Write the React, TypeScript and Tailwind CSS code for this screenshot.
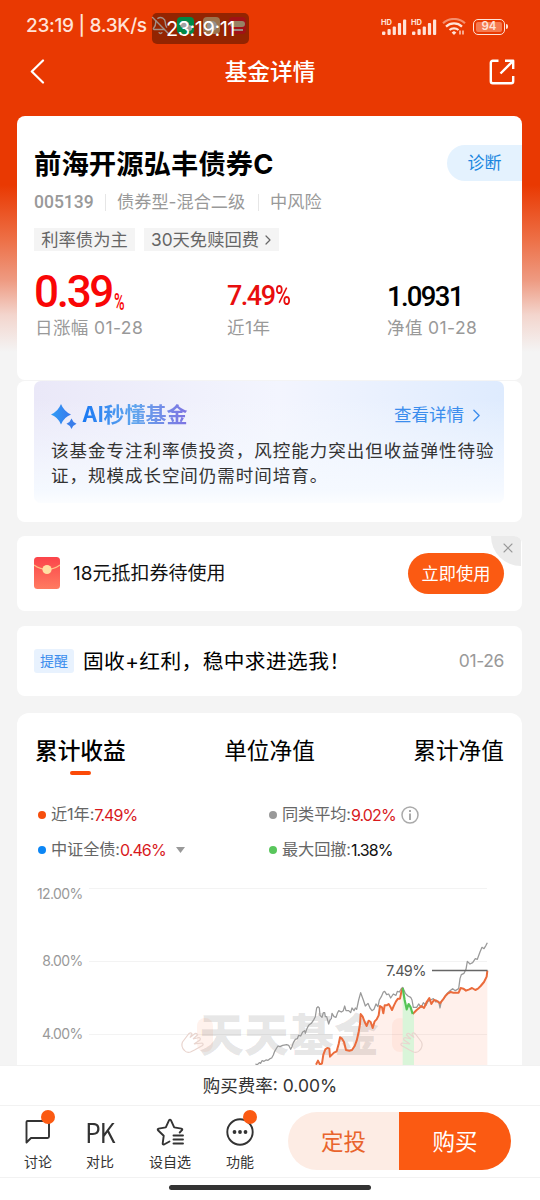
import type { ReactNode } from 'react';
import { ChevronRight, X, BellOff } from 'lucide-react';

const averageLine =
  '46,432 52,434 58,428 62,430 66,422 72,424 78,420 84,421 90,416 95,414 100,405 104,394 110,384 114,378 120,380 128,376 140,374 146,376 152,388 156,380 160,368 166,358 172,356 176,346 182,348 188,336 194,332 196,340 200,328 206,316 214,310 222,298 226,290 230,264 234,260 238,264 240,286 246,292 250,278 254,278 256,290 260,290 266,312 270,300 274,296 276,280 282,290 288,292 292,280 296,272 304,276 310,272 314,258 318,272 326,272 332,278 336,264 342,272 346,264 350,268 356,240 362,218 370,240 376,258 384,250 390,264 396,272 402,268 408,252 414,260 418,240 424,230 430,216 434,214 440,224 446,222 452,234 460,222 468,226 472,214 478,216 484,206 488,202 496,220 504,228 512,232 516,240 520,262 530,262 536,252 544,262 550,248 558,256 564,244 572,240 580,236 588,246 596,244 600,264 604,244 612,236 620,222 630,212 638,206 646,212 656,206 660,176 664,164 672,160 678,148 682,124 690,132 698,128 706,116 712,118 720,96 726,82 732,86 738,76 742,68';
const fundBefore =
  '228,434 234,422 240,434 246,430 250,404 256,388 262,384 268,386 270,410 276,404 282,398 290,394 296,372 300,352 306,356 312,366 318,390 328,392 336,390 344,378 350,362 356,336 360,312 362,282 368,290 374,306 380,318 386,302 392,306 398,324 404,304 410,298 416,286 420,258 426,262 430,280 434,256 440,256 446,252 452,262 456,270 462,256 468,244 474,236 480,236 484,216 488,204';
const drawdown = '488,204 494,240 500,268 506,252 512,262 518,282';
const fundAfter =
  '518,282 530,270 540,262 544,258 552,264 560,246 568,234 574,252 582,240 590,242 600,250 608,240 616,228 624,220 632,216 640,218 650,218 656,218 662,204 670,206 678,212 688,208 696,204 706,210 714,206 722,198 732,186 740,170 742,152';

const gridLines = [
  { label: '12.00%', y: 888.5, textY: 898.5 },
  { label: '8.00%', y: 961.5, textY: 966 },
  { label: '4.00%', y: 1034.5, textY: 1039 },
];

function Signal() {
  return (
    <div className="relative h-[18px] w-[26px]">
      <span className="absolute left-0 top-[1px] text-[7.500px] font-bold leading-none">HD</span>
      <svg className="h-[18px] w-[26px]" viewBox="0 0 26 18" fill="currentColor">
        <rect x="1" y="13.500" width="3.400" height="3.500" rx="1" />
        <rect x="6.500" y="11" width="3.200" height="6" rx="1" />
        <rect x="11.700" y="8.500" width="3.200" height="8.500" rx="1" />
        <rect x="16.900" y="5" width="3.200" height="12" rx="1" />
        <rect x="22" y="1.500" width="3.200" height="15.500" rx="1" />
      </svg>
    </div>
  );
}

function StatusBar() {
  return (
    <div className="relative flex h-[52px] items-center pt-px text-[#ffe3d8]">
      <span className="ml-[26px] whitespace-nowrap text-[19px] font-medium tracking-[-0.3px]">23:19 | 8.3K/s</span>
      <div className="absolute left-[151px] top-[16px] flex items-center gap-[7px]">
        <BellOff size={19} strokeWidth={1.8} />
        <div className="flex size-[17px] items-center justify-center rounded-[4px] bg-[#00d870]">
          <svg className="size-[14px]" viewBox="0 0 14 14" fill="#fff">
            <ellipse cx="5.5" cy="5.5" rx="4.5" ry="3.6" />
            <ellipse cx="9.5" cy="9" rx="3.8" ry="3" />
          </svg>
        </div>
        <div className="ml-[2px] flex size-[17px] items-center justify-center rounded-[4px] bg-[#f5b67b]">
          <div className="size-[10px] rounded-full bg-[#e7e5e4]" />
        </div>
        <div className="ml-[2px] flex size-[17px] flex-col items-center justify-center gap-[2px] rounded-[4px] bg-[#ff1c24]">
          <div className="h-[6px] w-[15px] rounded-full bg-[#f0d0a0]" />
          <div className="h-[2px] w-[11px] bg-[#f7d7cd]" />
        </div>
      </div>
      <div className="absolute left-[152px] top-[13px] flex h-[31px] w-[97px] items-center justify-center rounded-[5px] bg-black/37 text-[20px] tracking-[-0.5px] text-white">
        23:19:11
      </div>
      <div className="ml-auto mr-[32px] flex items-center gap-[4px]">
        <Signal />
        <Signal />
        <svg className="ml-[1px] h-[18px] w-[24px]" viewBox="0 0 24 18" fill="none" stroke="currentColor" strokeWidth="2.2">
          <path d="M1 5.2C7-.4 17-.4 23 5.2" opacity=".5" />
          <path d="M4 8.6c4.500-4.200 11.500-4.200 16 0M7.500 12c2.500-2.300 6.500-2.300 9 0" />
          <path d="m9.600 14.500 2.400-1.400 2.400 1.400-2.400 2.600z" fill="currentColor" stroke="none" />
          <path d="M18 12.500v4M21 12.500v4" strokeWidth="1.300" />
        </svg>
        <div className="ml-[3px] flex items-center">
          <div className="flex h-[16px] w-[32px] items-center justify-center rounded-[5px] border-[1.500px] border-[#ffe3d8] p-[2px]">
            <div className="flex h-full w-full items-center justify-center rounded-[2px] bg-[#f57a50] pt-px text-[11.500px] font-semibold leading-none">94</div>
          </div>
          <div className="ml-px h-[5px] w-[2px] rounded-r bg-[#ffe3d8]" />
        </div>
      </div>
    </div>
  );
}

function TitleBar() {
  return (
    <div className="flex h-[64px] items-start justify-between pl-[30px] pr-[25px] text-white">
      <svg className="mt-[7px] h-[25px] w-[15px]" viewBox="0 0 15 25" fill="none" stroke="currentColor" strokeWidth="2.200" strokeLinecap="round" strokeLinejoin="round">
        <path d="M13 1.500 1.800 12.500 13 23.500" />
      </svg>
      <h1 className="ml-[6px] mt-[4px] text-[22.700px] font-medium leading-[32px]">基金详情</h1>
      <svg className="mt-[7px] size-[26px]" viewBox="0 0 26 26" fill="none" stroke="currentColor" strokeWidth="2.400" strokeLinejoin="round">
        <path d="M9.500 1.800H3.800a2 2 0 0 0-2 2v18.400a2 2 0 0 0 2 2h18.400a2 2 0 0 0 2-2V17M16 1.800h8.200V10M24 2 11.500 14.500" />
      </svg>
    </div>
  );
}

function FundCard() {
  return (
    <section className="h-[264px] rounded-[8px] bg-white pl-[18px]">
      <div className="flex h-[65px] items-end justify-between">
        <h2 className="mb-[-3px] -ml-px text-[27.300px] font-bold leading-[38px] tracking-[0.100px] text-black">前海开源弘丰债券C</h2>
        <div className="flex h-[36px] w-[75px] items-center justify-center rounded-l-full bg-[#e4f2fe] pt-px text-[17px] text-[#1a86e0]">诊断</div>
      </div>
      <div className="-ml-px mt-[9px] flex h-[24px] items-center text-[17.200px] text-[#999]">
        <span className="w-[71px] text-[17.500px] font-medium font-[Roboto]">005139</span>
        <span className="h-[17px] w-px bg-[#e6e6e6]" />
        <span className="w-[152px] pl-[11px]">债券型-混合二级</span>
        <span className="h-[17px] w-px bg-[#e6e6e6]" />
        <span className="pl-[11px]">中风险</span>
      </div>
      <div className="-ml-px mt-[14px] flex h-[23px] gap-[9px] text-[17.300px] leading-[23px] text-[#666]">
        <span className="w-[101px] bg-[#f4f4f4] text-center">利率债为主</span>
        <span className="flex w-[135px] items-center bg-[#f4f4f4] pl-[7px]">
          30天免赎回费
          <ChevronRight className="ml-[1px]" size={16} strokeWidth={1.800} />
        </span>
      </div>
      <div className="mt-[16px] flex h-[50px] items-end font-[Roboto]">
        <div className="flex w-[192px] items-baseline text-[#f90606]">
          <span className="-ml-px text-[44px] font-medium leading-[50px] tracking-[-2.300px]">0.39</span>
          <span className="ml-[2px] inline-block origin-left translate-y-[3px] scale-x-[0.600] text-[24px] font-medium leading-none">%</span>
        </div>
        <div className="w-[160px] pt-px text-[27px] font-medium leading-[41px] tracking-[-1.500px] text-[#e80e0e]">7.49<span className="inline-block origin-left scale-x-[0.800]">%</span></div>
        <div className="text-[27.500px] font-medium leading-[41px] tracking-[-1.700px] text-black">1.0931</div>
      </div>
      <div className="-mt-px flex h-[24px] items-center text-[17.500px] tracking-[0.400px] text-[#999]">
        <span className="w-[192px]">日涨幅 01-28</span>
        <span className="w-[160px]">近1年</span>
        <span>净值 01-28</span>
      </div>
    </section>
  );
}

function AiCard() {
  return (
    <section className="mt-px h-[141px] rounded-[8px] bg-white px-[17px]">
      <div className="h-[122px] w-[470px] rounded-[7px] bg-[linear-gradient(to_bottom,transparent_15%,#f5f9ff_90%,#fbfdff),linear-gradient(to_right,#eae8f8,#f3f5fe_52%,#deebfe)] pl-[17px] pr-[7px] pt-[20px]">
        <div className="flex h-[28px] items-center">
          <svg className="mt-[3px] size-[26px]" viewBox="0 0 26 26">
            <defs>
              <linearGradient id="spark">
                <stop stopColor="#2f9df6" />
                <stop offset="1" stopColor="#3978ec" />
              </linearGradient>
            </defs>
            <path d="M10 0Q12.800 7.200 20 10.500 12.800 13.300 10 20.500 7.200 13.300 0 10.500 7.200 7.200 10 0z" fill="url(#spark)" />
            <path d="M20.500 14.500Q21.800 18.300 25.500 19.700 21.800 21.200 20.500 25 19.200 21.200 15.500 19.700 19.200 18.300 20.500 14.500z" fill="#3a7eea" />
          </svg>
          <span className="ml-[5px] bg-linear-to-r from-[#1678f3] via-[#5fa5ed] to-[#7d73e2] bg-clip-text text-[21px] font-bold leading-[28px] text-transparent">AI秒懂基金</span>
          <span className="ml-auto flex items-center text-[17.500px] text-[#3b8ded]">
            查看详情
            <ChevronRight className="ml-[2px] mr-[10px]" size={21} strokeWidth={1.600} />
          </span>
        </div>
        <p className="mt-[9px] whitespace-nowrap text-[17.500px] leading-[25px] tracking-[0.980px] text-[#333]">
          该基金专注利率债投资，风控能力突出但收益弹性待验
          <br />
          证，规模成长空间仍需时间培育。
        </p>
      </div>
    </section>
  );
}

function CouponCard() {
  return (
    <section className="relative mt-[14px] flex h-[75px] items-center overflow-hidden rounded-[8px] bg-white pl-[17px] pr-[18px]">
      <svg className="mb-px h-[32px] w-[26px]" viewBox="0 0 26 32">
        <defs>
          <linearGradient id="packet" x2="0" y2="1">
            <stop stopColor="#fb444a" />
            <stop offset="1" stopColor="#ff7b61" />
          </linearGradient>
        </defs>
        <rect width="26" height="32" rx="3.500" fill="url(#packet)" />
        <path d="M0 8q13 9 26 0" fill="none" stroke="#ffc184" strokeWidth="1.200" />
        <circle cx="13" cy="12.500" r="4.600" fill="#ffe0a3" />
      </svg>
      <span className="ml-[13px] pt-px text-[19px] text-[#111]">18元抵扣券待使用</span>
      <div className="absolute right-px top-0 size-[30px] rounded-bl-full bg-[#ebebeb]">
        <X className="ml-[9px] mt-[4px] text-[#999]" size={16} strokeWidth={1.600} />
      </div>
      <button className="relative ml-auto h-[41px] w-[96px] rounded-full bg-[#fb5a12] text-[17.200px] text-white">立即使用</button>
    </section>
  );
}

function NoticeCard() {
  return (
    <section className="mt-[15px] flex h-[70px] items-center rounded-[8px] bg-white pl-[17px] pr-[18px]">
      <span className="h-[24px] w-[40px] rounded-[3px] bg-[#e8f2fe] text-center text-[14px] leading-[24px] text-[#3b8ded]">提醒</span>
      <span className="ml-[9px] pt-px text-[20.700px] tracking-[0.420px] text-black">固收+红利，稳中求进选我！</span>
      <span className="ml-auto text-[17.500px] tracking-[-0.400px] text-[#999]">01-26</span>
    </section>
  );
}

interface LegendProps {
  color: string;
  label: string;
  value: string;
  valueColor: string;
  children?: ReactNode;
}

function Legend({ color, label, value, valueColor, children }: LegendProps) {
  return (
    <div className="flex items-center text-[16.200px]">
      <span className="mr-[5px] size-[8px] rounded-full" style={{ background: color }} />
      <span className="tracking-[-0.100px] text-[#666]">{label}:</span>
      <span className="text-[16px] tracking-[-0.900px]" style={{ color: valueColor }}>{value}</span>
      {children}
    </div>
  );
}

function Hand() {
  return (
    <path
      d="M1.500 11 8 2.500q2-1.500 3 .5l-2 3.500 5-4q2-.5 2.500 1.500L12 8l6-1.500q2 .5 1 2.500l-6 4 8-1q2 1 .5 2.500l-8 4.500-4 2q-4 1-6-1.500-4-4-2-8.500z"
      fill="none"
      stroke="#e9d5cf"
      strokeWidth="1.200"
    />
  );
}

function Chart() {
  return (
    <svg className="block h-[185px] w-[505px]" viewBox="17 880 505 185">
      {gridLines.map((line) => (
        <g key={line.label}>
          <line x1="89" x2="487" y1={line.y} y2={line.y} stroke="#f3f3f3" />
          <text x="82.500" y={line.textY} textAnchor="end" fontSize="14" letterSpacing="-0.65" fill="#999">{line.label}</text>
        </g>
      ))}
      {/* plot lines are kept at three units per pixel */}
      <g transform="translate(240 920) scale(0.33333)">
        <polygon points={`${fundBefore} ${drawdown} ${fundAfter} 742,436 228,436`} fill="#fb6a3c" fillOpacity="0.1" />
      </g>
      <rect x="197" y="1018" width="16" height="34" rx="8" fill="#fb6a3c" fillOpacity="0.09" />
      <rect x="392" y="1018" width="16" height="34" rx="8" fill="#fb6a3c" fillOpacity="0.07" />
      <text x="199" y="1052" fontSize="45" fontWeight="900" fill="#000" fillOpacity="0.1">天天基金</text>
      <g transform="translate(240 920) scale(0.33333)" fill="none" strokeLinejoin="round">
        <polygon points={`${drawdown} 522,282 522,436 488,436`} fill="#d9f5d9" />
        <polyline points={averageLine} stroke="#999" strokeWidth="3.800" />
        <polyline points={fundBefore} stroke="#eb6b3b" strokeWidth="6" />
        <polyline points={fundAfter} stroke="#eb6b3b" strokeWidth="6" />
        <polyline points={drawdown} stroke="#55c455" strokeWidth="6.500" />
      </g>
      <g transform="translate(181 1031)"><Hand /></g>
      <g transform="translate(423 1031) scale(-1 1)"><Hand /></g>
      <line x1="432" x2="487.500" y1="970.500" y2="970.500" stroke="#666" strokeWidth="1.300" />
      <text x="386" y="976" fontSize="14.500" letterSpacing="-0.7" fill="#555">7.49%</text>
    </svg>
  );
}

function PerformanceCard() {
  return (
    <section className="mt-[17px] rounded-t-[12px] bg-white">
      <div className="flex h-[66px] justify-between pl-[18px] pr-[18px] pt-[22px] text-[22.700px] leading-[32px] text-black">
        <div className="flex flex-col items-center font-medium">
          累计收益
          <span className="mt-[4px] h-[4px] w-[21px] rounded-full bg-[#fb4a08]" />
        </div>
        <span>单位净值</span>
        <span>累计净值</span>
      </div>
      <div className="grid h-[101px] grid-cols-[231px_1fr] grid-rows-[35px_35px] pl-[21px] pt-[18px]">
        <Legend color="#f64e0d" label="近1年" value="7.49%" valueColor="#d8191d" />
        <Legend color="#999" label="同类平均" value="9.02%" valueColor="#d8191d">
          <svg className="ml-[5px] size-[18px]" viewBox="0 0 18 18" fill="none" stroke="#aaa" strokeWidth="1.500">
            <circle cx="9" cy="9" r="8" />
            <path d="M9 7.500V14" strokeWidth="2" />
            <path d="M9 4v2" strokeWidth="2" />
          </svg>
        </Legend>
        <Legend color="#0c86f5" label="中证全债" value="0.46%" valueColor="#d8191d">
          <svg className="ml-[10px] h-[6px] w-[9px]" viewBox="0 0 9 6"><path d="M0 0h9L4.500 6z" fill="#999" /></svg>
        </Legend>
        <Legend color="#59c65c" label="最大回撤" value="1.38%" valueColor="#111" />
      </div>
      <Chart />
    </section>
  );
}

function NavItem({ label, badge, children }: { label: string; badge?: boolean; children: ReactNode }) {
  return (
    <div className="relative flex w-[70px] flex-col items-center text-[#333]">
      <div className="flex h-[28px] items-center justify-center">{children}</div>
      {badge && <span className="absolute left-[38px] top-[-8px] size-[14px] rounded-full bg-[#fb5a12]" />}
      <span className="mt-[6px] text-[14px] leading-[20px]">{label}</span>
    </div>
  );
}

function BottomBar() {
  return (
    <footer className="h-[135px] bg-white">
      <div className="flex h-[40px] items-center justify-center border-t border-[#f2f2f2] pt-px text-[17.500px] text-[#333]">购买费率: 0.00%</div>
      <div className="flex h-[73px] border-y border-[#f2f2f2] pl-[3px] pt-[12px]">
        <NavItem label="讨论" badge>
          <svg className="size-[26px]" viewBox="0 0 26 26" fill="none" stroke="currentColor" strokeWidth="1.900" strokeLinejoin="round">
            <path d="M2.500 2h20q1.500 0 1.500 1.500v14q0 1.500-1.500 1.500H6l-4.500 4.500V3q0-1 1-1z" />
          </svg>
        </NavItem>
        <div className="-ml-[8px]">
          <NavItem label="对比">
            <span className="scale-x-[0.920] font-['Noto_Sans_CJK_SC'] text-[26.500px] leading-none tracking-[-1px]">PK</span>
          </NavItem>
        </div>
        <NavItem label="设自选">
          <svg className="size-[28px]" viewBox="0 0 28 28" fill="none" stroke="currentColor" strokeWidth="1.900" strokeLinejoin="round" strokeLinecap="round">
            <path d="m13.500 23.500-5.500 3q-1.500.3-1.300-1.200l1-7.500-5.700-5.600q-.8-1.300.6-1.600l7.200-1.200L13 2.300q1-1.300 2 0l3.200 7.100 7.200 1.200q1.400.3.600 1.600l-2.300 2.300" />
            <path d="M17.500 17.500H27M17.500 21.500H27M17.500 25.500H27" />
          </svg>
        </NavItem>
        <NavItem label="功能" badge>
          <svg className="size-[28px]" viewBox="0 0 28 28" fill="none" stroke="currentColor" strokeWidth="1.900">
            <circle cx="14" cy="14" r="12.700" />
            <g fill="currentColor" stroke="none">
              <circle cx="8.500" cy="14" r="1.900" />
              <circle cx="14" cy="14" r="1.900" />
              <circle cx="19.500" cy="14" r="1.900" />
            </g>
          </svg>
        </NavItem>
        <div className="-mt-[6px] ml-[13px] flex h-[58px] w-[223px] overflow-hidden rounded-full text-[22.500px]">
          <button className="w-[111px] bg-[#fdece4] pt-px text-[#e9642c]">定投</button>
          <button className="w-[112px] bg-[#fb5a12] pt-px text-white">购买</button>
        </div>
      </div>
      <div className="mx-auto mt-[7px] h-[5px] w-[202px] rounded-full bg-[#333]" />
    </footer>
  );
}

export default function App() {
  return (
    <div className="flex h-[1200px] w-[540px] flex-col overflow-hidden bg-[#f4f4f4] bg-[linear-gradient(to_bottom,#e93902_0px,#e93902_185px,#ed7047_240px,#ee9a81_280px,#f3d5cd_315px,#f4f4f4_352px)] font-['Inter','Noto_Sans_CJK_SC',sans-serif]">
      <StatusBar />
      <TitleBar />
      <main className="ml-[17px] flex h-[949px] w-[505px] shrink-0 flex-col overflow-hidden">
        <FundCard />
        <AiCard />
        <CouponCard />
        <NoticeCard />
        <PerformanceCard />
      </main>
      <BottomBar />
    </div>
  );
}
